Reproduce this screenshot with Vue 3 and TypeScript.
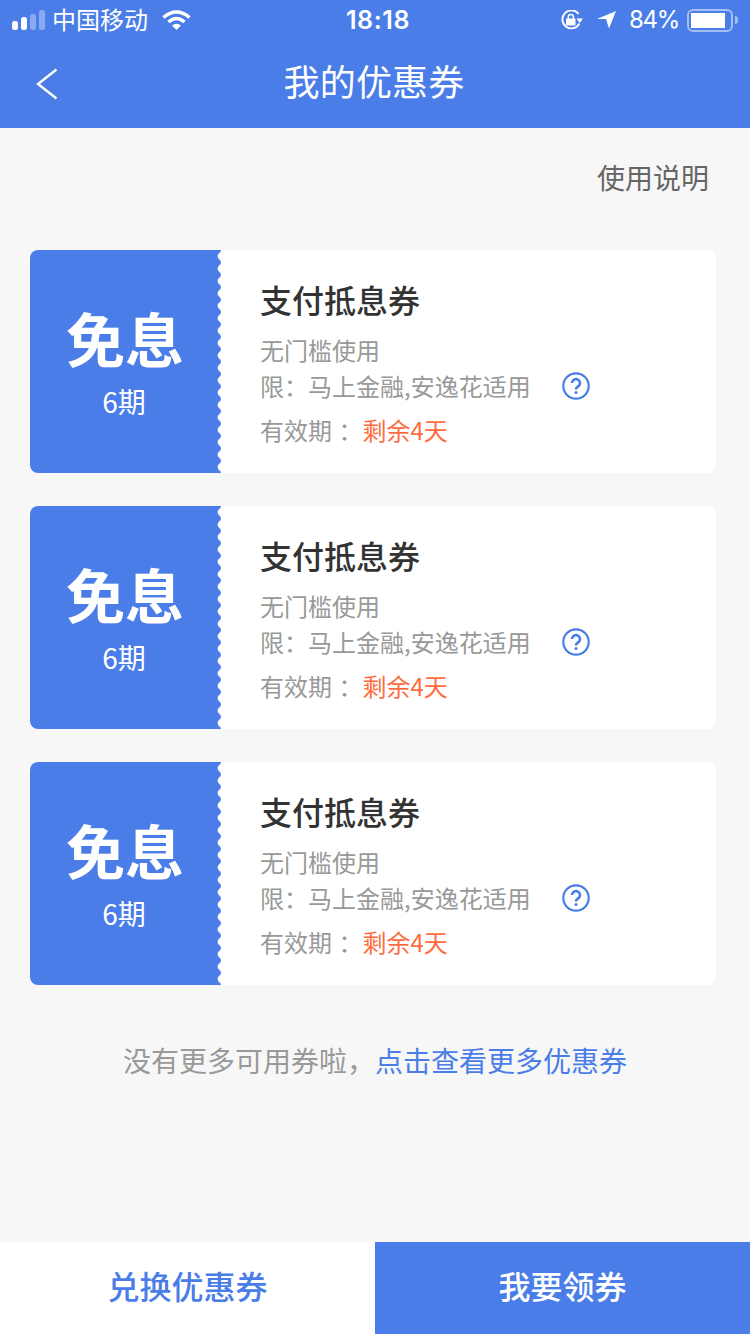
<script setup lang="ts">
const coupons = [1, 2, 3]
</script>
<template>
  <div class="page">
    <header class="head">
      <div class="status">
        <div class="status-left">
          <svg class="signal" width="33" height="20" viewBox="0 0 33 20">
            <rect x="0" y="11" width="6" height="9" rx="2.5" fill="#fff" />
            <rect x="9" y="7" width="6" height="13" rx="2.5" fill="#fff" />
            <rect x="18" y="4" width="6" height="16" rx="2.5" fill="#fff" fill-opacity=".35" />
            <rect x="27" y="0" width="6" height="20" rx="2.5" fill="#fff" fill-opacity=".35" />
          </svg>
          <span class="carrier">中国移动</span>
          <svg class="wifi" width="29" height="20" viewBox="0 0 29 20">
            <path d="M1.5 7.5 Q14.5 -3.5 27.5 7.5" fill="none" stroke="#fff" stroke-width="3.6" />
            <path d="M6.5 12 Q14.5 5 22.5 12" fill="none" stroke="#fff" stroke-width="3.6" />
            <path d="M10 15.5 Q14.5 12 19 15.5 L14.5 20 Z" fill="#fff" />
          </svg>
        </div>
        <div class="time">18:18</div>
        <div class="status-right">
          <svg width="22" height="20" viewBox="0 0 22 20">
            <path d="M18.4 13.5 A9 9 0 1 1 17.6 4" fill="none" stroke="#fff" stroke-width="1.9" />
            <path d="M15.5 8.5 H22 L18.8 13 Z" fill="#fff" />
            <rect x="5" y="8.6" width="9.5" height="6.8" rx="1" fill="#fff" />
            <path d="M7.2 9 V7 a2.6 2.6 0 0 1 5.2 0 V9" fill="none" stroke="#fff" stroke-width="1.5" />
          </svg>
          <svg class="arrow" width="19" height="18" viewBox="0 0 19 18">
            <path d="M0 8 L19 0 L12 17.5 L9 8 Z" fill="#fff" />
          </svg>
          <span class="percent">84%</span>
          <div class="battery"><i></i></div>
          <div class="battery-cap"></div>
        </div>
      </div>
      <div class="nav">
        <svg class="back" width="22" height="32" viewBox="0 0 22 32">
          <path d="M20.5 1.5 L2 16 L20.5 30.5" fill="none" stroke="#fff" stroke-width="2.4" />
        </svg>
        <h1>我的优惠券</h1>
      </div>
    </header>

    <div class="help-row">使用说明</div>

    <ul class="list">
      <li v-for="c in coupons" :key="c" class="card">
        <div class="stub">
          <div class="stub-big">免息</div>
          <div class="stub-small">6期</div>
          <svg class="edge" width="4" height="223">
            <defs>
              <pattern :id="'wave' + c" width="4" height="12.4" patternUnits="userSpaceOnUse">
                <path d="M4 0 C4 3 0.6 3 0.6 6.2 C0.6 9.4 4 9.4 4 12.4 Z" fill="#fff" />
              </pattern>
            </defs>
            <rect width="4" height="223" :fill="'url(#wave' + c + ')'" />
          </svg>
        </div>
        <div class="info">
          <div class="title">支付抵息券</div>
          <div class="line first">无门槛使用</div>
          <div class="line limit">
            <span class="limit-text">限：马上金融,安逸花适用</span>
            <svg class="ask" width="28" height="28" viewBox="0 0 28 28">
              <circle cx="14" cy="14" r="12.7" fill="none" stroke="#4a7de8" stroke-width="2.2" />
              <path d="M10 11 a4 4 0 1 1 6 3.5 q-2 1 -2 3" fill="none" stroke="#4a7de8" stroke-width="2.6" />
              <circle cx="14" cy="20.5" r="1.6" fill="#4a7de8" />
            </svg>
          </div>
          <div class="line expire">有效期 ：<em>剩余4天</em></div>
        </div>
      </li>
    </ul>

    <p class="more">没有更多可用券啦，<a>点击查看更多优惠券</a></p>

    <footer class="foot">
      <button class="exchange">兑换优惠券</button>
      <button class="claim">我要领券</button>
    </footer>
  </div>
</template>
<style scoped>
.page {
  min-height: 1334px;
  display: flex;
  flex-direction: column;
  background: #f7f7f7;
  font-family: "Noto Sans CJK SC", "Liberation Sans", sans-serif;
}

.head {
  background: #4a7de8;
  color: #fff;
}

.status {
  height: 40px;
  display: grid;
  grid-template-columns: 1fr auto 1fr;
  align-items: center;
  padding: 0 12px;
}

.status-left,
.status-right {
  display: flex;
  align-items: center;
}

.status-right {
  justify-content: flex-end;
}

.carrier {
  font-size: 24px;
  margin: 0 0 2px 7px;
  line-height: 38px;
}

.wifi {
  margin-left: 14px;
}

.time {
  font-family: Inter, "Liberation Sans", sans-serif;
  font-size: 25px;
  font-weight: 600;
  letter-spacing: .6px;
  line-height: 40px;
  margin-left: 6px;
}

.arrow {
  margin-left: 14px;
}

.percent {
  font-family: Inter, "Liberation Sans", sans-serif;
  font-size: 24px;
  letter-spacing: -1.3px;
  margin-left: 13px;
  line-height: 40px;
}

.battery {
  width: 46px;
  height: 23px;
  margin-left: 8px;
  padding: 2px;
  box-sizing: border-box;
  border: 2px solid rgba(255, 255, 255, .5);
  border-radius: 6px;
}

.battery i {
  display: block;
  width: 34px;
  height: 15px;
  background: #fff;
}

.battery-cap {
  width: 3px;
  height: 8px;
  margin-left: 2px;
  background: rgba(255, 255, 255, .5);
  border-radius: 0 3px 3px 0;
}

.nav {
  height: 88px;
  padding: 0 2px 8px 0;
  box-sizing: border-box;
  display: flex;
  align-items: center;
  justify-content: center;
  position: relative;
}

.back {
  position: absolute;
  left: 36px;
  top: 28px;
}

.nav h1 {
  margin: 0;
  font-size: 36px;
  letter-spacing: .2px;
  font-weight: 400;
}

.help-row {
  padding: 28px 41px 0 0;
  height: 92px;
  box-sizing: border-box;
  text-align: right;
  font-size: 28px;
  line-height: 42px;
  color: #666;
}

.list {
  list-style: none;
  margin: 30px 34px 0 30px;
  padding: 0;
  display: flex;
  flex-direction: column;
  gap: 33px;
}

.card {
  height: 223px;
  display: flex;
  background: #fff;
  border-radius: 8px;
}

.stub {
  width: 191px;
  position: relative;
  display: flex;
  flex-direction: column;
  align-items: center;
  padding-right: 1px;
  box-sizing: border-box;
  background: #4a7de8;
  border-radius: 8px 0 0 8px;
  color: #fff;
}

.stub-big {
  margin-top: 53px;
  font-size: 59px;
  line-height: 70px;
  font-weight: 700;
}

.stub-small {
  font-size: 28px;
  line-height: 40px;
  margin: 8px 2px 0 0;
}

.edge {
  position: absolute;
  right: 0;
  top: 0;
}

.info {
  flex: 1;
  padding: 26px 0 0 39px;
}

.title {
  font-size: 32px;
  line-height: 46px;
  font-weight: 500;
  color: #333;
}

.line {
  font-size: 24px;
  line-height: 36px;
  color: #999;
}

.first {
  margin-top: 10px;
}

.limit {
  display: flex;
  align-items: center;
}

.ask {
  margin-left: 31px;
}

.expire {
  margin-top: 8px;
  word-spacing: 1px;
}

.expire em {
  font-style: normal;
  color: #ff6d3f;
}

.more {
  margin: 55px 0 0;
  text-align: center;
  font-size: 28px;
  line-height: 40px;
  color: #999;
}

.more a {
  color: #4a7de8;
}

.foot {
  margin-top: auto;
  height: 92px;
  display: flex;
}

.foot button {
  flex: 1;
  border: 0;
  padding: 0 0 7px;
  font: inherit;
  font-size: 32px;
  font-weight: 500;
}

.exchange {
  background: #fff;
  color: #4a7de8;
}

.claim {
  background: #4a7de8;
  color: #fff;
}
</style>
